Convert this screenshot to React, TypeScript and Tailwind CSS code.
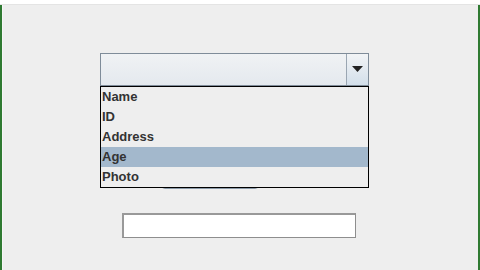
export default function App() {
  const items = ['Name', 'ID', 'Address', 'Age', 'Photo']
  const selected = 'Age'

  return (
    <div className="w-[480px] h-[270px] bg-white flex flex-col overflow-hidden" style={{ fontFamily: '"Liberation Sans", Arial, sans-serif' }}>
      <div className="h-[5px] bg-white border-b border-[#e4e4e4]" />
      <div className="flex-1 flex border-l-2 border-r-2 border-[#2f7a32]">
        <div className="flex-1 bg-[#eeeeee] border-l border-[#f6f6f6] flex flex-col items-start pt-[48px]">
          {/* combo box */}
          <div className="relative w-[269px] ml-[97px]">
            <div className="h-[33px] flex border border-[#7f8c99] bg-gradient-to-b from-[#f0f2f4] to-[#e4e9ee]">
              <div className="flex-1 border-r border-[#9aa6b2]" />
              <div className="w-[21px] flex items-center justify-center bg-gradient-to-b from-[#f2f4f6] to-[#d3dfea]">
                <svg width="11" height="7" viewBox="0 0 11 7">
                  <path d="M0 0H11L5.5 6Z" fill="#222" />
                </svg>
              </div>
            </div>

            {/* popup list */}
            <div className="absolute left-0 top-[33px] w-[269px] z-10 border border-black bg-[#eeeeee]">
              {items.map((it) => (
                <div
                  key={it}
                  className={`h-[20px] flex items-center pl-px text-[13px] font-bold text-[#333333] ${it === selected ? 'bg-[#a3b8cc]' : ''}`}
                >
                  {it}
                </div>
              ))}
            </div>
          </div>

          {/* button partly hidden under the popup */}
          <div className="mt-[71px] ml-[158px] w-[98px] h-[32px] border border-[#8a99a8] rounded-sm bg-gradient-to-b from-[#f4f6f8] to-[#dde5ec]" />

          {/* text field */}
          <div className="mt-[24px] ml-[119px] w-[234px] h-[25px] bg-white border border-[#8e8e8e] border-t-2 border-l-2 border-t-[#999999] border-l-[#999999]" />
        </div>
      </div>
    </div>
  )
}
